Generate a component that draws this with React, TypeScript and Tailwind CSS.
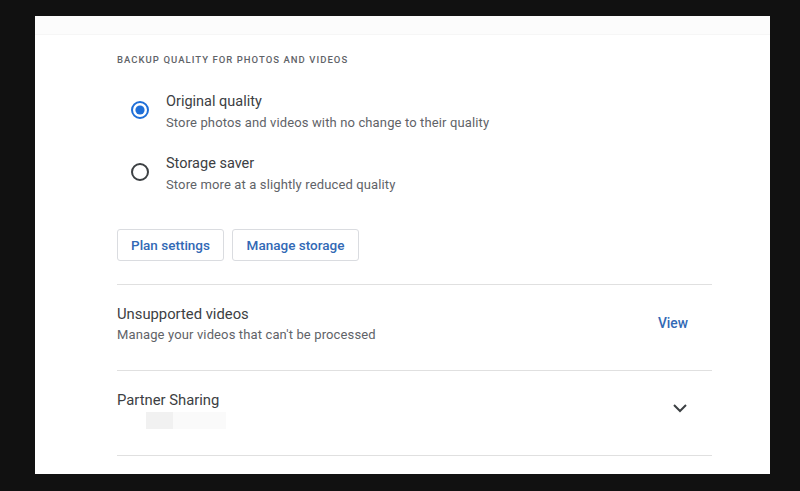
import React from "react";

function Radio({ checked }: { checked: boolean }) {
  return (
    <div className="w-[18px] h-[18px] shrink-0 mt-[9px]">
      <svg width="18" height="18" viewBox="0 0 18 18">
        <circle
          cx="9"
          cy="9"
          r="8"
          fill="none"
          stroke={checked ? "#1f6fd8" : "#3c4043"}
          strokeWidth="2"
        />
        {checked && <circle cx="9" cy="9" r="4.6" fill="#1f6fd8" />}
      </svg>
    </div>
  );
}

export default function App() {
  return (
    <div
      className="w-[800px] h-[491px] bg-[#111111] pt-[16px] pl-[35px]"
      style={{ fontFamily: "Roboto, 'Liberation Sans', sans-serif" }}
    >
      <div className="w-[735px] h-[458px] bg-white flex flex-col">
        <div className="h-[19px] bg-[#fcfcfc] border-b border-[#f6f6f6]" />
        <div className="pl-[82px] pr-[58px] flex flex-col">
          <div className="mt-[18px] text-[9.5px] leading-[14px] font-medium tracking-[0.11em] text-[#5f6368] uppercase">
            Backup quality for photos and videos
          </div>

          <div className="mt-[25px] flex flex-row gap-[17px] pl-[14px]">
            <Radio checked />
            <div className="flex flex-col">
              <div className="text-[14.5px] leading-[20px] text-[#3c4043]">Original quality</div>
              <div className="mt-[2px] text-[13px] leading-[18px] text-[#5f6368] tracking-[0.01em]">
                Store photos and videos with no change to their quality
              </div>
            </div>
          </div>

          <div className="mt-[22px] flex flex-row gap-[17px] pl-[14px]">
            <Radio checked={false} />
            <div className="flex flex-col">
              <div className="text-[14.5px] leading-[20px] text-[#3c4043]">Storage saver</div>
              <div className="mt-[2px] text-[13px] leading-[18px] text-[#5f6368] tracking-[0.01em]">
                Store more at a slightly reduced quality
              </div>
            </div>
          </div>

          <div className="mt-[35px] flex flex-row gap-[8px]">
            <button className="h-[32px] w-[107px] border border-[#dadce0] rounded-[3px] text-[13.5px] font-medium text-[#3269b5] flex items-center justify-center">
              Plan settings
            </button>
            <button className="h-[32px] w-[127px] border border-[#dadce0] rounded-[3px] text-[13.5px] font-medium text-[#3269b5] flex items-center justify-center">
              Manage storage
            </button>
          </div>

          <div className="mt-[23px] border-t border-[#e0e0e0]" />

          <div className="h-[85px] flex flex-row items-start pr-[24px]">
            <div className="flex flex-col pt-[19px] flex-1">
              <div className="text-[14.8px] leading-[20px] text-[#3c4043]">Unsupported videos</div>
              <div className="mt-[2px] text-[13px] leading-[18px] text-[#5f6368] tracking-[0.01em]">
                Manage your videos that can't be processed
              </div>
            </div>
            <div className="pt-[29px] text-[13.8px] leading-[18px] font-medium text-[#3269b5]">View</div>
          </div>

          <div className="border-t border-[#e0e0e0]" />

          <div className="h-[84px] flex flex-row items-start pr-[24px]">
            <div className="flex flex-col pt-[19px] flex-1">
              <div className="text-[14.8px] leading-[20px] text-[#3c4043]">Partner Sharing</div>
              <div className="mt-[2px] flex flex-row pl-[29px]">
                <div className="w-[27px] h-[17px] bg-[#f1f1f1]" />
                <div className="w-[53px] h-[17px] bg-[#fafafa]" />
              </div>
            </div>
            <div className="pt-[32px]">
              <svg width="16" height="10" viewBox="0 0 16 10">
                <polyline
                  points="2,2 8,8 14,2"
                  fill="none"
                  stroke="#3c4043"
                  strokeWidth="2"
                />
              </svg>
            </div>
          </div>

          <div className="border-t border-[#e0e0e0]" />
        </div>
      </div>
    </div>
  );
}
